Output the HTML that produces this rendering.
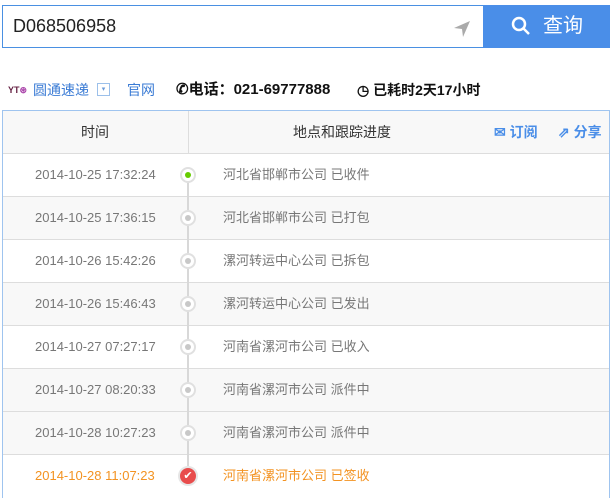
<html><head><style>
body{margin:0;width:616px;height:501px;background:#fff;font-family:"Liberation Sans","Noto Sans CJK SC",sans-serif;position:relative;overflow:hidden}
.in{position:absolute;left:2px;top:5px;width:481px;height:43px;border:1px solid #4a90e2;border-right:none;box-sizing:border-box}
.in span{position:absolute;left:10px;top:0;line-height:41px;font-size:18px;color:#222}
.btn{position:absolute;left:483px;top:5px;width:127px;height:43px;background:#4a8ee8;color:#fff;font-size:20px}
.bar{position:absolute;top:80px;font-size:14px;line-height:20px;height:20px}
.tb{position:absolute;left:2px;top:110px;width:608px;height:388px;border:1px solid #9fc4ef;box-sizing:border-box}
.hd{position:absolute;left:0;top:0;width:606px;height:43px;background:#f8f8f8;border-bottom:1px solid #ddd;font-size:14px;color:#333;line-height:43px;box-sizing:border-box}
.row{position:absolute;left:0;width:606px;height:43px;border-bottom:1px solid #ddd;font-size:13px;color:#777;box-sizing:border-box;line-height:42px}
.row .t{position:absolute;left:32px;top:0}
.row .p{position:absolute;left:220px;top:0}
.line{position:absolute;left:184px;top:64px;width:2px;height:300px;background:#d8d8d8;z-index:1}
.dot{position:absolute;left:177px;top:13px;width:12px;height:12px;border-radius:50%;background:#fff;border:2px solid #e0e0e0;z-index:2}
.dot i{position:absolute;left:3px;top:3px;width:6px;height:6px;border-radius:50%;background:#c8c8c8}
</style></head><body>
<div class="in"><span>D068506958</span>
<svg style="position:absolute;left:450px;top:14px" width="18" height="18"><path d="M17 1 L1 8 L9 9 L10 17 Z" fill="#aaa"/></svg></div>
<div class="btn"><svg style="position:absolute;left:28px;top:11px" width="20" height="20"><circle cx="8" cy="8" r="6" fill="none" stroke="#fff" stroke-width="2.5"/><path d="M12.5 12.5 L18 18" stroke="#fff" stroke-width="2.5"/></svg><span style="position:absolute;left:60px;top:0;line-height:43px">查询</span></div>
<div class="bar" style="left:8px;font-size:9px;color:#624;font-weight:bold">YT<span style="color:#a4a">⊛</span></div>
<div class="bar" style="left:33px;color:#3a7bd5">圆通速递</div>
<div class="bar" style="left:97px;top:83px;width:11px;height:11px;border:1px solid #9cc0ea;font-size:7px;line-height:11px;text-align:center;color:#6a9ad8">▾</div>
<div class="bar" style="left:127px;color:#3a7bd5">官网</div>
<div class="bar" style="left:176px;color:#111;font-weight:bold;font-size:15px">✆电话：021-69777888</div>
<div class="bar" style="left:357px;color:#111;font-weight:bold;font-size:14px">◷ 已耗时2天17小时</div>
<div class="tb">
<div class="hd"><span style="position:absolute;left:78px;top:0">时间</span><div style="position:absolute;left:185px;top:0;width:1px;height:43px;background:#ddd"></div><span style="position:absolute;left:290px;top:0">地点和跟踪进度</span><span style="position:absolute;left:491px;top:0;color:#4a8ee8;font-weight:bold">✉ 订阅</span><span style="position:absolute;left:555px;top:0;color:#4a8ee8;font-weight:bold">⇗ 分享</span></div>
<div class="line"></div>
<div class="row" style="top:43px;background:#fff"><span class="t">2014-10-25 17:32:24</span><div class="dot"><i style="background:#6c0"></i></div><span class="p">河北省邯郸市公司 已收件</span></div>
<div class="row" style="top:86px;background:#f8f8f8"><span class="t">2014-10-25 17:36:15</span><div class="dot"><i></i></div><span class="p">河北省邯郸市公司 已打包</span></div>
<div class="row" style="top:129px;background:#fff"><span class="t">2014-10-26 15:42:26</span><div class="dot"><i></i></div><span class="p">漯河转运中心公司 已拆包</span></div>
<div class="row" style="top:172px;background:#f8f8f8"><span class="t">2014-10-26 15:46:43</span><div class="dot"><i></i></div><span class="p">漯河转运中心公司 已发出</span></div>
<div class="row" style="top:215px;background:#fff"><span class="t">2014-10-27 07:27:17</span><div class="dot"><i></i></div><span class="p">河南省漯河市公司 已收入</span></div>
<div class="row" style="top:258px;background:#f8f8f8"><span class="t">2014-10-27 08:20:33</span><div class="dot"><i></i></div><span class="p">河南省漯河市公司 派件中</span></div>
<div class="row" style="top:301px;background:#f8f8f8"><span class="t">2014-10-28 10:27:23</span><div class="dot"><i></i></div><span class="p">河南省漯河市公司 派件中</span></div>
<div class="row" style="top:344px;background:#fff;border-bottom:none;color:#f39322"><span class="t">2014-10-28 11:07:23</span><div class="dot" style="left:175px;top:11px;width:16px;height:16px;background:#e84c4c;border-color:#e6e6e6;color:#fff;font-size:11px;text-align:center;line-height:16px">✔</div><span class="p">河南省漯河市公司 已签收</span></div>
</div>
</body></html>
